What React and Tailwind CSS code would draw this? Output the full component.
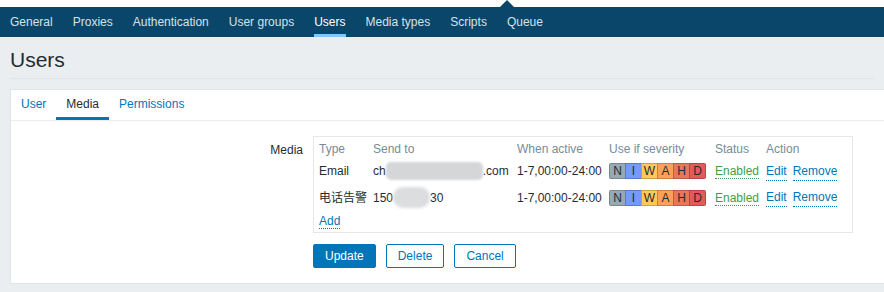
import React from 'react';

const navItems = ['General', 'Proxies', 'Authentication', 'User groups', 'Users', 'Media types', 'Scripts', 'Queue'];

const severities = [
  { label: 'N', bg: 'bg-[#97aab3]' },
  { label: 'I', bg: 'bg-[#7499ff]' },
  { label: 'W', bg: 'bg-[#ffc859]' },
  { label: 'A', bg: 'bg-[#ffa059]' },
  { label: 'H', bg: 'bg-[#e97659]' },
  { label: 'D', bg: 'bg-[#e45959]' },
];

const SeverityBox = () => (
  <div className="inline-flex rounded-[2px] overflow-hidden">
    {severities.map((s, i) => (
      <span
        key={s.label}
        className={`${s.bg} ${i === 0 ? '' : '-ml-px'} w-[17px] h-[16px] flex items-center justify-center border border-black/20 text-[#1f2c33] leading-none`}
      >
        {s.label}
      </span>
    ))}
  </div>
);

const MediaRow = ({ type, sendTo, height }) => (
  <div className={`grid grid-cols-[54px_144px_92px_106px_51px_auto] items-center ${height}`}>
    <span>{type}</span>
    <span className="flex items-center">{sendTo}</span>
    <span>1-7,00:00-24:00</span>
    <span>
      <SeverityBox />
    </span>
    <span>
      <span className="text-[#429e47] border-b border-dotted border-[#429e47]">Enabled</span>
    </span>
    <span className="flex gap-[6px]">
      <span className="text-[#0275b8] border-b border-dotted border-[#0275b8]">Edit</span>
      <span className="text-[#0275b8] border-b border-dotted border-[#0275b8]">Remove</span>
    </span>
  </div>
);

export default function App() {
  return (
    <div className="w-[884px] h-[292px] overflow-hidden bg-[#ebeef0] font-['Liberation_Sans','Noto_Sans_CJK_SC',sans-serif] text-[12px] text-[#1f2c33]">
      {/* top strip with first-level indicator */}
      <div className="relative h-[7px] bg-white">
        <div className="absolute left-[500px] top-0 w-0 h-0 border-x-[7px] border-x-transparent border-b-[7px] border-b-[#0a466a]" />
      </div>

      <nav className="h-[30px] bg-[#0a466a] flex">
        {navItems.map((item) => (
          <div key={item} className="px-[10px] h-full flex">
            <span
              className={`flex items-center border-y-[3px] border-t-transparent ${
                item === 'Users' ? 'text-white border-b-[#84c6f5]' : 'text-[#d4e2ec] border-b-transparent'
              }`}
            >
              {item}
            </span>
          </div>
        ))}
      </nav>

      <div className="mx-[10px] h-[42px] border-b border-[#dfe4e7] flex items-center pt-[4px]">
        <h1 className="text-[21px] leading-none font-normal">Users</h1>
      </div>

      <div className="mt-[10px] ml-[10px] w-[900px] bg-white border border-[#dfe4e7]">
        <div className="h-[31px] flex border-b border-[#ebeef0]">
          {['User', 'Media', 'Permissions'].map((tab) => (
            <div
              key={tab}
              className={`px-[10px] flex items-center border-b-[3px] ${
                tab === 'Media' ? 'border-[#0275b8] text-[#1f2c33]' : 'border-transparent text-[#0275b8]'
              }`}
            >
              {tab}
            </div>
          ))}
        </div>

        <div className="pt-[15px] pb-[15px]">
          <div className="flex gap-[10px]">
            <div className="w-[292px] text-right pt-[5px]">Media</div>
            <div className="w-[540px] border border-[#e5e8eb] px-[5px] pt-[3px] pb-[4px]">
              <div className="grid grid-cols-[54px_144px_92px_106px_51px_auto] items-center h-[18px] text-[#768d99]">
                <span>Type</span>
                <span>Send to</span>
                <span>When active</span>
                <span>Use if severity</span>
                <span>Status</span>
                <span>Action</span>
              </div>
              <MediaRow
                type="Email"
                height="h-[26px]"
                sendTo={
                  <>
                    ch
                    <span className="inline-block w-[97px] h-[18px] bg-[#d4d6d8] rounded-[5px] blur-[1px]" />
                    .com
                  </>
                }
              />
              <MediaRow
                type="电话告警"
                height="h-[27px]"
                sendTo={
                  <>
                    150
                    <span className="inline-block w-[37px] h-[21px] bg-[#dcdddf] rounded-[10px] blur-[1.5px]" />
                    30
                  </>
                }
              />
              <div className="h-[17px] pt-[1px]">
                <span className="text-[#0275b8] border-b border-dotted border-[#0275b8]">Add</span>
              </div>
            </div>
          </div>

          <div className="ml-[302px] mt-[11px] flex gap-[10px]">
            <button className="h-[24px] px-[11px] rounded-[2px] bg-[#0275b8] border border-[#0275b8] text-white">Update</button>
            <button className="h-[24px] px-[11px] rounded-[2px] bg-white border border-[#0275b8] text-[#0275b8]">Delete</button>
            <button className="h-[24px] px-[11px] rounded-[2px] bg-white border border-[#0275b8] text-[#0275b8]">Cancel</button>
          </div>
        </div>
      </div>
    </div>
  );
}
